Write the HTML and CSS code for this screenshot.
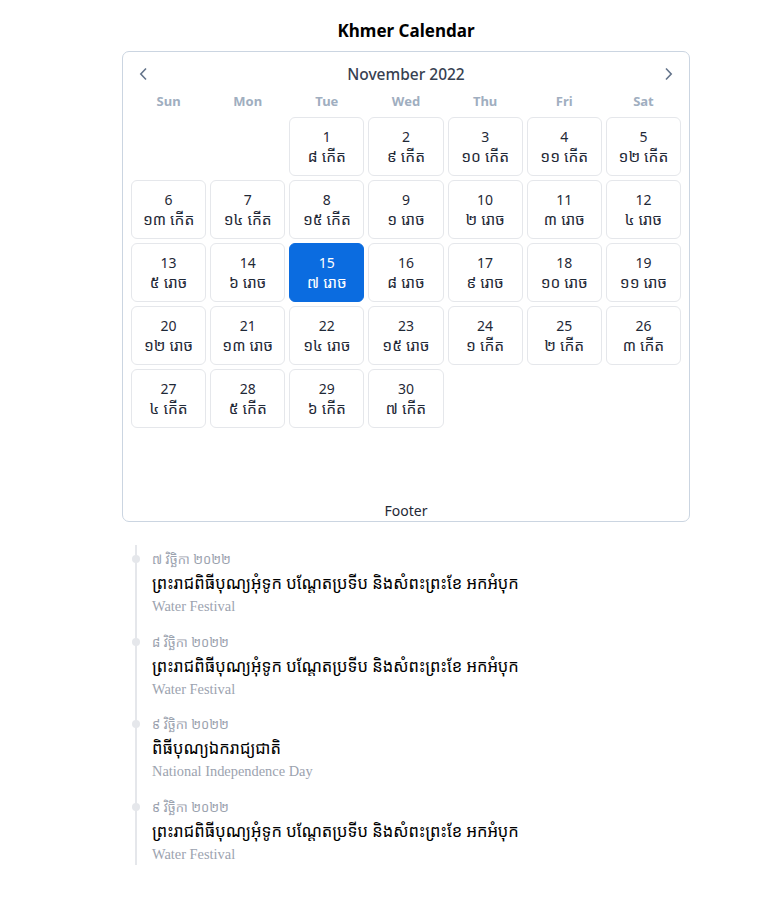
FILE: index.html
```html
<!DOCTYPE html>
<html lang="km">
<head>
<meta charset="utf-8">
<title>Khmer Calendar</title>
<link rel="stylesheet" href="styles.css">
</head>
<body>
<div class="page">
  <h1 class="title">Khmer Calendar</h1>
  <div class="card">
    <div class="cal-head">
      <button class="nav"><svg width="12" height="14" viewBox="0 0 12 14"><path d="M8 1.5 L2.8 7 L8 12.5" fill="none" stroke="#64748b" stroke-width="1.6"/></svg></button>
      <div class="month">November 2022</div>
      <button class="nav"><svg width="12" height="14" viewBox="0 0 12 14"><path d="M4 1.5 L9.2 7 L4 12.5" fill="none" stroke="#64748b" stroke-width="1.6"/></svg></button>
    </div>
    <div class="weekdays">
      <span>Sun</span><span>Mon</span><span>Tue</span><span>Wed</span><span>Thu</span><span>Fri</span><span>Sat</span>
    </div>
    <div class="grid">
      <div class="blank"></div><div class="blank"></div>
      <div class="day"><span class="n">1</span><span class="k">៨ កើត</span></div>
      <div class="day"><span class="n">2</span><span class="k">៩ កើត</span></div>
      <div class="day"><span class="n">3</span><span class="k">១០ កើត</span></div>
      <div class="day"><span class="n">4</span><span class="k">១១ កើត</span></div>
      <div class="day"><span class="n">5</span><span class="k">១២ កើត</span></div>
      <div class="day"><span class="n">6</span><span class="k">១៣ កើត</span></div>
      <div class="day"><span class="n">7</span><span class="k">១៤ កើត</span></div>
      <div class="day"><span class="n">8</span><span class="k">១៥ កើត</span></div>
      <div class="day"><span class="n">9</span><span class="k">១ រោច</span></div>
      <div class="day"><span class="n">10</span><span class="k">២ រោច</span></div>
      <div class="day"><span class="n">11</span><span class="k">៣ រោច</span></div>
      <div class="day"><span class="n">12</span><span class="k">៤ រោច</span></div>
      <div class="day"><span class="n">13</span><span class="k">៥ រោច</span></div>
      <div class="day"><span class="n">14</span><span class="k">៦ រោច</span></div>
      <div class="day sel"><span class="n">15</span><span class="k">៧ រោច</span></div>
      <div class="day"><span class="n">16</span><span class="k">៨ រោច</span></div>
      <div class="day"><span class="n">17</span><span class="k">៩ រោច</span></div>
      <div class="day"><span class="n">18</span><span class="k">១០ រោច</span></div>
      <div class="day"><span class="n">19</span><span class="k">១១ រោច</span></div>
      <div class="day"><span class="n">20</span><span class="k">១២ រោច</span></div>
      <div class="day"><span class="n">21</span><span class="k">១៣ រោច</span></div>
      <div class="day"><span class="n">22</span><span class="k">១៤ រោច</span></div>
      <div class="day"><span class="n">23</span><span class="k">១៥ រោច</span></div>
      <div class="day"><span class="n">24</span><span class="k">១ កើត</span></div>
      <div class="day"><span class="n">25</span><span class="k">២ កើត</span></div>
      <div class="day"><span class="n">26</span><span class="k">៣ កើត</span></div>
      <div class="day"><span class="n">27</span><span class="k">៤ កើត</span></div>
      <div class="day"><span class="n">28</span><span class="k">៥ កើត</span></div>
      <div class="day"><span class="n">29</span><span class="k">៦ កើត</span></div>
      <div class="day"><span class="n">30</span><span class="k">៧ កើត</span></div>
    </div>
    <div class="footer">Footer</div>
  </div>

  <ul class="timeline">
    <li class="item">
      <div class="date">៧ វិច្ឆិកា ២០២២</div>
      <div class="name">ព្រះរាជពិធីបុណ្យអុំទូក បណ្តែតប្រទីប និងសំពះព្រះខែ អកអំបុក</div>
      <div class="en">Water Festival</div>
    </li>
    <li class="item">
      <div class="date">៨ វិច្ឆិកា ២០២២</div>
      <div class="name">ព្រះរាជពិធីបុណ្យអុំទូក បណ្តែតប្រទីប និងសំពះព្រះខែ អកអំបុក</div>
      <div class="en">Water Festival</div>
    </li>
    <li class="item">
      <div class="date">៩ វិច្ឆិកា ២០២២</div>
      <div class="name">ពិធីបុណ្យឯករាជ្យជាតិ</div>
      <div class="en">National Independence Day</div>
    </li>
    <li class="item">
      <div class="date">៩ វិច្ឆិកា ២០២២</div>
      <div class="name">ព្រះរាជពិធីបុណ្យអុំទូក បណ្តែតប្រទីប និងសំពះព្រះខែ អកអំបុក</div>
      <div class="en">Water Festival</div>
    </li>
  </ul>
</div>
</body>
</html>
```

FILE: styles.css
```css
* { box-sizing: border-box; }
html, body { margin: 0; padding: 0; background: #fff; }
body {
  font-family: "Noto Sans", "Noto Sans Khmer", "Khmer OS", sans-serif;
  color: #1f2937;
}
.page {
  width: 568px;
  margin-left: 122px;
  padding-top: 19px;
}
.title {
  margin: 0 0 8px;
  text-align: center;
  font-size: 17px;
  font-weight: 700;
  color: #000;
  line-height: 24px;
}
.card {
  border: 1px solid #cbd5e1;
  border-radius: 7px;
  padding: 8px 8px 0;
  height: 471px;
  display: flex;
  flex-direction: column;
}
.cal-head {
  display: flex;
  align-items: center;
  justify-content: space-between;
  height: 28px;
  padding: 0 5px;
}
.nav {
  border: 0;
  background: none;
  padding: 0;
  width: 16px;
  height: 20px;
  display: flex;
  align-items: center;
  justify-content: center;
}
.month {
  font-size: 15.5px;
  color: #374151;
  font-weight: 500;
}
.weekdays {
  display: grid;
  grid-template-columns: repeat(7, 1fr);
  gap: 4px;
  margin-top: 4px;
  height: 18px;
  line-height: 18px;
  text-align: center;
  font-size: 13px;
  font-weight: 700;
  color: #a0aec0;
}
.grid {
  margin-top: 7px;
  display: grid;
  grid-template-columns: repeat(7, 1fr);
  grid-template-rows: repeat(6, 59px);
  gap: 4px;
}
.day {
  border: 1px solid #e5e7eb;
  border-radius: 6px;
  display: flex;
  flex-direction: column;
  align-items: center;
  justify-content: center;
  color: #1f2937;
  padding: 1px 0 2px;
}
.day .n { font-size: 14px; line-height: 19px; }
.day .k { font-size: 15.5px; line-height: 20px; }
.day.sel {
  background: #0b6ce0;
  border-color: #0b6ce0;
  color: #fff;
}
.footer {
  margin-top: auto;
  text-align: center;
  font-size: 14px;
  color: #1f2937;
  height: 19px;
  line-height: 18px;
}
.timeline {
  list-style: none;
  margin: 23px 0 0 13px;
  padding: 0 0 0 15px;
  border-left: 2px solid #e5e7eb;
  width: 430px;
}
.item {
  position: relative;
  height: 82.7px;
  padding-top: 3px;
}
.item::before {
  content: "";
  position: absolute;
  left: -20px;
  top: 10px;
  width: 8px;
  height: 8px;
  border-radius: 50%;
  background: #e5e7eb;
}
.item:last-child { height: 72px; }
.date {
  font-size: 13px;
  color: #9ca3af;
  line-height: 22px;
}
.name {
  font-size: 16.5px;
  color: #000;
  line-height: 26px;
}
.en {
  font-family: "Liberation Serif", serif;
  font-size: 14.4px;
  color: #9ca3af;
  line-height: 18px;
  margin-top: 1px;
}
```
